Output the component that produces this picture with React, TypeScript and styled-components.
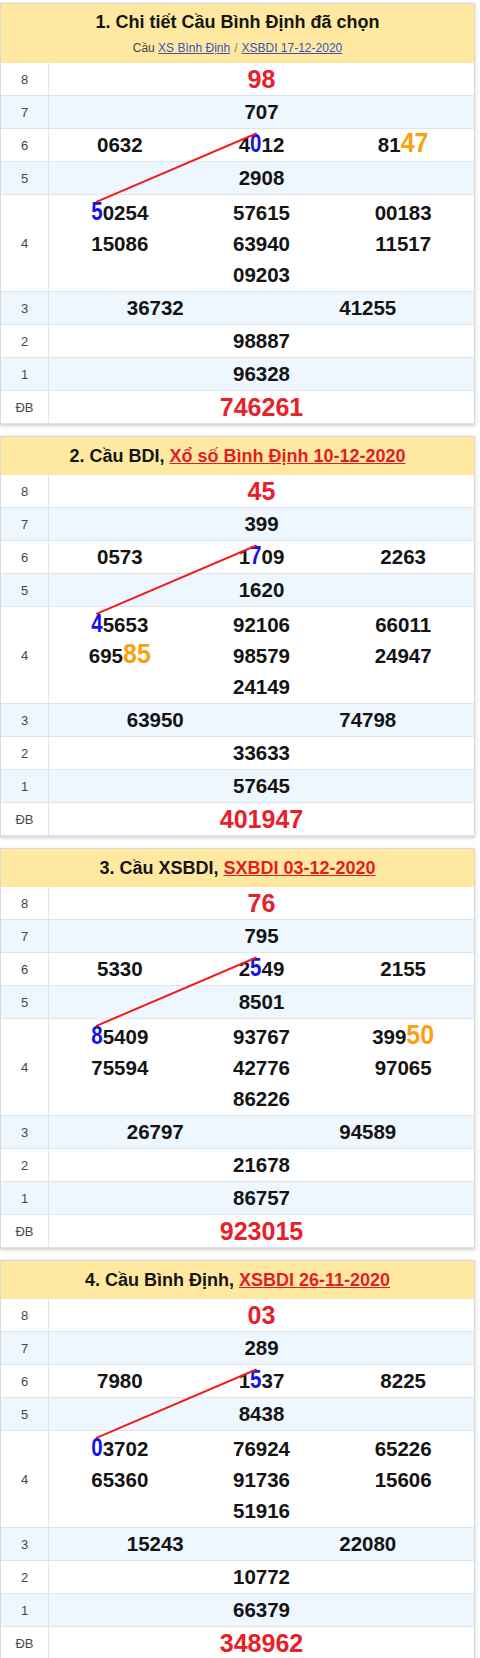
import React, { useLayoutEffect, useRef, useState } from "react";
import styled, { createGlobalStyle } from "styled-components";

const Global = createGlobalStyle`
  html, body { margin: 0; padding: 0; background: #ffffff; }
  body { font-family: "Liberation Sans", Arial, sans-serif; color: #111; }
`;

const Page = styled.div`
  padding: 3px 5px 0 0;
`;

const Card = styled.section`
  position: relative;
  background: #fff;
  border: 1px solid #d9d9d9;
  box-shadow: 0 1px 4px rgba(0, 0, 0, 0.18);
  margin-bottom: 11px;
`;

const Header = styled.header<{ $tall?: boolean }>`
  background: #ffe9a1;
  text-align: center;
  padding: ${(p) => (p.$tall ? "5px 0 2px" : "6px 0")};
`;

const Title = styled.h2`
  margin: 0;
  font-size: 18px;
  line-height: 26px;
  font-weight: 700;
  color: #151515;
`;

const TitleLink = styled.a`
  color: #e31d25;
  text-decoration: underline;
`;

const Sub = styled.div`
  font-size: 12px;
  line-height: 26px;
  color: #444;
`;

const SubLink = styled.a`
  color: #3e52b4;
  text-decoration: underline;
`;

const Sep = styled.span`
  color: #777;
  margin: 0 4px;
`;

const Body = styled.div`
  position: relative;
`;

const Row = styled.div<{ $alt?: boolean }>`
  display: grid;
  grid-template-columns: 48px 1fr;
  background: ${(p) => (p.$alt ? "#eef6fe" : "#ffffff")};
  border-bottom: 1px solid #dfe5ec;
  &:last-child { border-bottom: none; }
`;

const Label = styled.div`
  display: flex;
  align-items: center;
  justify-content: center;
  border-right: 1px solid #dfe5ec;
  font-size: 13px;
  color: #474747;
`;

const Cells = styled.div<{ $cols: number; $multi?: boolean }>`
  display: grid;
  grid-template-columns: repeat(${(p) => p.$cols}, 1fr);
  padding: ${(p) => (p.$multi ? "2px 0 1px" : "0")};
`;

const Num = styled.div<{ $big?: boolean; $center?: boolean }>`
  text-align: center;
  font-weight: 700;
  white-space: nowrap;
  font-size: ${(p) => (p.$big ? "25px" : "20.5px")};
  line-height: ${(p) => (p.$big ? "32px" : "31px")};
  color: ${(p) => (p.$big ? "#e8202a" : "#141414")};
  grid-column: ${(p) => (p.$center ? "2" : "auto")};
`;

const SingleNum = styled(Num)`
  line-height: 32px;
`;

const Blue = styled.span`
  display: inline-block;
  color: #1212ee;
  line-height: 1;
  transform: scaleY(1.25);
  transform-origin: 50% 84.65%;
`;

const Orange = styled.span`
  display: inline-block;
  color: #fb9f0e;
  font-size: 25px;
  line-height: 1;
  transform: scaleY(1.1);
  transform-origin: 50% 84.65%;
`;

const Overlay = styled.svg`
  position: absolute;
  left: 0;
  top: 0;
  width: 100%;
  height: 100%;
  pointer-events: none;
  overflow: visible;
`;

type Seg = { text: string; kind: "plain" | "start" | "end" | "hot" };

function parse(s: string): Seg[] {
  const out: Seg[] = [];
  const re = /\^(\d)|\*(\d)|<(\d+)>|(\d+)/g;
  let m: RegExpExecArray | null;
  while ((m = re.exec(s))) {
    if (m[1]) out.push({ text: m[1], kind: "start" });
    else if (m[2]) out.push({ text: m[2], kind: "end" });
    else if (m[3]) out.push({ text: m[3], kind: "hot" });
    else out.push({ text: m[4], kind: "plain" });
  }
  return out;
}

type CardData = {
  title: React.ReactNode;
  sub?: boolean;
  g8: string;
  g7: string;
  g6: string[];
  g5: string;
  g4: string[];
  g3: string[];
  g2: string;
  g1: string;
  db: string;
};

const cards: CardData[] = [
  {
    title: "1. Chi tiết Cầu Bình Định đã chọn",
    sub: true,
    g8: "98",
    g7: "707",
    g6: ["0632", "4*012", "81<47>"],
    g5: "2908",
    g4: ["^50254", "57615", "00183", "15086", "63940", "11517", "09203"],
    g3: ["36732", "41255"],
    g2: "98887",
    g1: "96328",
    db: "746261",
  },
  {
    title: (
      <>
        2. Cầu BDI, <TitleLink href="#">Xổ số Bình Định 10-12-2020</TitleLink>
      </>
    ),
    g8: "45",
    g7: "399",
    g6: ["0573", "1*709", "2263"],
    g5: "1620",
    g4: ["^45653", "92106", "66011", "695<85>", "98579", "24947", "24149"],
    g3: ["63950", "74798"],
    g2: "33633",
    g1: "57645",
    db: "401947",
  },
  {
    title: (
      <>
        3. Cầu XSBDI, <TitleLink href="#">SXBDI 03-12-2020</TitleLink>
      </>
    ),
    g8: "76",
    g7: "795",
    g6: ["5330", "2*549", "2155"],
    g5: "8501",
    g4: ["^85409", "93767", "399<50>", "75594", "42776", "97065", "86226"],
    g3: ["26797", "94589"],
    g2: "21678",
    g1: "86757",
    db: "923015",
  },
  {
    title: (
      <>
        4. Cầu Bình Định, <TitleLink href="#">XSBDI 26-11-2020</TitleLink>
      </>
    ),
    g8: "03",
    g7: "289",
    g6: ["7980", "1*537", "8225"],
    g5: "8438",
    g4: ["^03702", "76924", "65226", "65360", "91736", "15606", "51916"],
    g3: ["15243", "22080"],
    g2: "10772",
    g1: "66379",
    db: "348962",
  },
];

type Line = { x1: number; y1: number; x2: number; y2: number };

function LottoCard({ data }: { data: CardData }) {
  const bodyRef = useRef<HTMLDivElement>(null);
  const startRef = useRef<HTMLSpanElement>(null);
  const endRef = useRef<HTMLSpanElement>(null);
  const [line, setLine] = useState<Line | null>(null);

  useLayoutEffect(() => {
    const measure = () => {
      const b = bodyRef.current;
      const s = startRef.current;
      const e = endRef.current;
      if (!b || !s || !e) return;
      const br = b.getBoundingClientRect();
      const sr = s.getBoundingClientRect();
      const er = e.getBoundingClientRect();
      setLine({
        x1: sr.left + sr.width / 2 - br.left,
        y1: sr.top - br.top + 3,
        x2: er.left + er.width / 2 - br.left,
        y2: er.top - br.top + 3,
      });
    };
    measure();
    if (document.fonts && document.fonts.ready) document.fonts.ready.then(measure);
    window.addEventListener("resize", measure);
    return () => window.removeEventListener("resize", measure);
  }, []);

  const renderNum = (s: string) =>
    parse(s).map((seg, i) => {
      if (seg.kind === "start")
        return (
          <Blue key={i} ref={startRef}>
            {seg.text}
          </Blue>
        );
      if (seg.kind === "end")
        return (
          <Blue key={i} ref={endRef}>
            {seg.text}
          </Blue>
        );
      if (seg.kind === "hot") return <Orange key={i}>{seg.text}</Orange>;
      return <React.Fragment key={i}>{seg.text}</React.Fragment>;
    });

  return (
    <Card>
      <Header $tall={data.sub}>
        <Title>{data.title}</Title>
        {data.sub && (
          <Sub>
            Cầu <SubLink href="#">XS Bình Định</SubLink>
            <Sep>/</Sep>
            <SubLink href="#">XSBDI 17-12-2020</SubLink>
          </Sub>
        )}
      </Header>
      <Body ref={bodyRef}>
        <Row>
          <Label>8</Label>
          <Cells $cols={1}>
            <SingleNum $big>{data.g8}</SingleNum>
          </Cells>
        </Row>
        <Row $alt>
          <Label>7</Label>
          <Cells $cols={1}>
            <SingleNum>{data.g7}</SingleNum>
          </Cells>
        </Row>
        <Row>
          <Label>6</Label>
          <Cells $cols={3}>
            {data.g6.map((n, i) => (
              <SingleNum key={i}>{renderNum(n)}</SingleNum>
            ))}
          </Cells>
        </Row>
        <Row $alt>
          <Label>5</Label>
          <Cells $cols={1}>
            <SingleNum>{data.g5}</SingleNum>
          </Cells>
        </Row>
        <Row>
          <Label>4</Label>
          <Cells $cols={3} $multi>
            {data.g4.map((n, i) => (
              <Num key={i} $center={i === 6}>
                {renderNum(n)}
              </Num>
            ))}
          </Cells>
        </Row>
        <Row $alt>
          <Label>3</Label>
          <Cells $cols={2}>
            {data.g3.map((n, i) => (
              <SingleNum key={i}>{n}</SingleNum>
            ))}
          </Cells>
        </Row>
        <Row>
          <Label>2</Label>
          <Cells $cols={1}>
            <SingleNum>{data.g2}</SingleNum>
          </Cells>
        </Row>
        <Row $alt>
          <Label>1</Label>
          <Cells $cols={1}>
            <SingleNum>{data.g1}</SingleNum>
          </Cells>
        </Row>
        <Row>
          <Label>ĐB</Label>
          <Cells $cols={1}>
            <SingleNum $big>{data.db}</SingleNum>
          </Cells>
        </Row>
        {line && (
          <Overlay>
            <line
              x1={line.x1}
              y1={line.y1}
              x2={line.x2}
              y2={line.y2}
              stroke="#f21a1a"
              strokeWidth={2}
              strokeLinecap="round"
            />
          </Overlay>
        )}
      </Body>
    </Card>
  );
}

export default function App() {
  return (
    <>
      <Global />
      <Page>
        {cards.map((c, i) => (
          <LottoCard key={i} data={c} />
        ))}
      </Page>
    </>
  );
}
